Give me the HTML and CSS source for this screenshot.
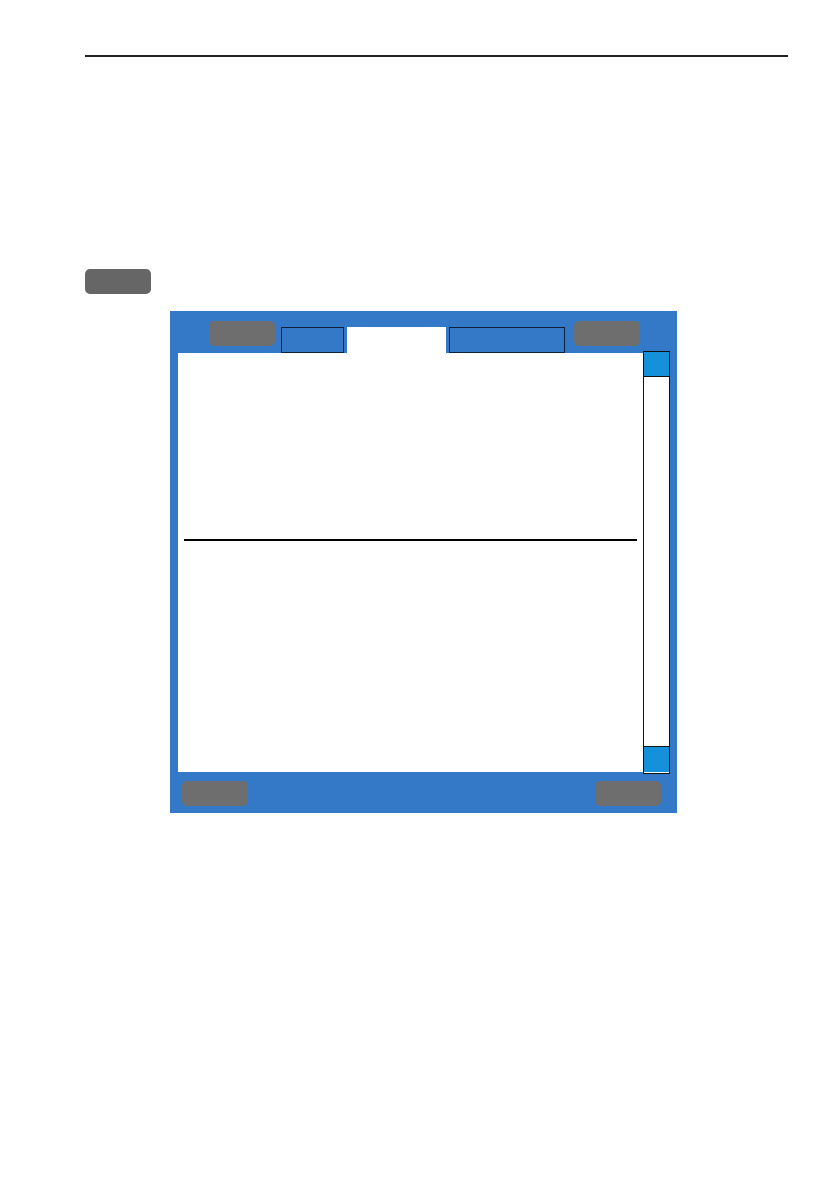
FILE: index.html
```html
<!DOCTYPE html>
<html>
<head>
<meta charset="utf-8">
<link rel="stylesheet" href="styles.css">
</head>
<body>
<div class="page">
  <div class="rule"></div>
  <div class="key"></div>
  <div class="panel">
    <div class="tabbar">
      <div class="btn"></div>
      <div class="tab tab-a"></div>
      <div class="tab tab-active"></div>
      <div class="tab tab-c"></div>
      <div class="btn btn-right"></div>
    </div>
    <div class="body">
      <div class="content">
        <div class="divider"></div>
      </div>
      <div class="scrollbar">
        <div class="sb-btn sb-up"></div>
        <div class="sb-track"></div>
        <div class="sb-btn sb-down"></div>
      </div>
    </div>
    <div class="footer">
      <div class="btn"></div>
      <div class="btn"></div>
    </div>
  </div>
</div>
</body>
</html>
```

FILE: styles.css
```css
html, body {
  margin: 0;
  padding: 0;
  background: #ffffff;
  font-family: "Liberation Sans", Arial, sans-serif;
}
.page {
  width: 840px;
  height: 1190px;
  padding: 0 52px 0 85px;
  box-sizing: border-box;
  overflow: hidden;
}
.rule {
  margin-top: 55px;
  height: 2px;
  background: #222222;
}
.key {
  margin-top: 212px;
  width: 66px;
  height: 25px;
  border-radius: 5px;
  background: #666666;
}
.panel {
  margin-top: 17px;
  margin-left: 85px;
  width: 507px;
  height: 502px;
  background: #3479c7;
  display: flex;
  flex-direction: column;
}
.tabbar {
  height: 42px;
  flex: none;
  display: flex;
  align-items: flex-start;
  padding: 10px 0 0 39px;
  box-sizing: border-box;
}
.btn {
  width: 66px;
  height: 25px;
  border-radius: 5px;
  background: #6e6e6e;
  flex: none;
}
.tab {
  margin-top: 6px;
  height: 26px;
  box-sizing: border-box;
  flex: none;
}
.tab-a {
  margin-left: 6px;
  width: 63px;
  border: 1px solid #0f1f3a;
  border-bottom-width: 1px;
}
.tab-active {
  margin-left: 3px;
  width: 99px;
  background: #ffffff;
}
.tab-c {
  margin-left: 3px;
  width: 116px;
  border: 1px solid #0f1f3a;
}
.btn-right {
  margin-left: 9px;
}
.body {
  display: flex;
  align-items: flex-start;
  padding-left: 8px;
  height: 419px;
  flex: none;
}
.content {
  width: 465px;
  height: 419px;
  background: #ffffff;
  padding: 186px 6px 0 6px;
  box-sizing: border-box;
}
.divider {
  height: 2px;
  background: #000000;
}
.scrollbar {
  margin-top: -2px;
  width: 27px;
  height: 423px;
  border: 1px solid #111111;
  box-sizing: border-box;
  background: #ffffff;
  display: flex;
  flex-direction: column;
}
.sb-btn {
  height: 24px;
  background: #1591db;
  flex: none;
}
.sb-up {
  border-bottom: 1px solid #111111;
}
.sb-track {
  flex: 1;
}
.sb-down {
  height: 25px;
  border-top: 1px solid #111111;
  margin-bottom: 1px;
}
.footer {
  display: flex;
  justify-content: space-between;
  padding: 9px 16px 0 12px;
}
```
